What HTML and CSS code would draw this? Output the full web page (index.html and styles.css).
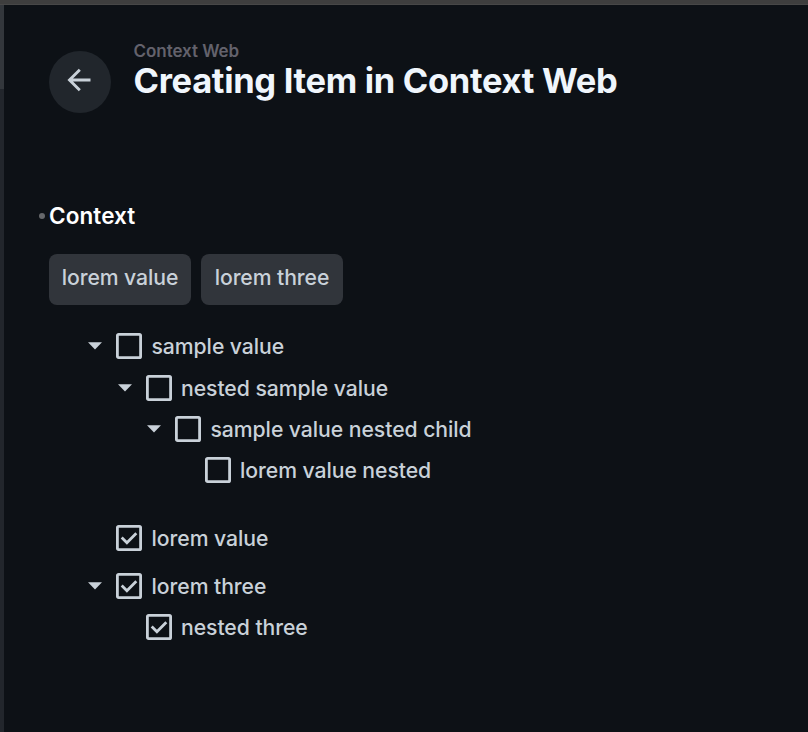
FILE: index.html
```html
<!DOCTYPE html>
<html lang="en">
<head>
<meta charset="utf-8">
<title>Creating Item in Context Web</title>
<link rel="stylesheet" href="styles.css">
</head>
<body>
<svg class="defs" aria-hidden="true">
  <symbol id="caret" viewBox="0 0 14 8"><path d="M0 .3h14L7 7.6z" fill="currentColor"/></symbol>
  <symbol id="box" viewBox="0 0 26 26"><rect x="1.4" y="1.4" width="23.2" height="23.2" rx="1.2" fill="none" stroke="currentColor" stroke-width="2.8"/></symbol>
  <symbol id="checked" viewBox="0 0 26 26"><rect x="1.4" y="1.4" width="23.2" height="23.2" rx="1.2" fill="none" stroke="currentColor" stroke-width="2.8"/><path d="M5.7 12.5l5.2 5.2L20.3 8.3" fill="none" stroke="currentColor" stroke-width="2.8"/></symbol>
</svg>
<div class="topbar"></div>
<div class="shell">
  <div class="rail"><div class="thumb"></div></div>
  <main class="panel">
    <header class="header">
      <button class="back" aria-label="Back">
        <svg width="24" height="24" viewBox="0 0 24 24" fill="none" stroke="currentColor" stroke-width="2.9"><path d="M23.5 12H2.5M12.8 1.7L2.5 12l10.3 10.3"/></svg>
      </button>
      <div class="titles">
        <div class="crumb">Context Web</div>
        <h1 class="title">Creating Item in Context Web</h1>
      </div>
    </header>
    <section class="field">
      <h2 class="label"><span class="dot"></span><span class="name">Context</span></h2>
      <div class="chips"><span class="chip">lorem value</span><span class="chip">lorem three</span></div>
      <ul class="tree">
        <li>
          <div class="row first"><svg class="caret"><use href="#caret"/></svg><svg class="box"><use href="#box"/></svg><span>sample value</span></div>
          <ul>
            <li>
              <div class="row"><svg class="caret"><use href="#caret"/></svg><svg class="box"><use href="#box"/></svg><span>nested sample value</span></div>
              <ul>
                <li>
                  <div class="row"><svg class="caret"><use href="#caret"/></svg><svg class="box"><use href="#box"/></svg><span>sample value nested child</span></div>
                  <ul>
                    <li><div class="row leaf"><svg class="box"><use href="#box"/></svg><span>lorem value nested</span></div></li>
                  </ul>
                </li>
              </ul>
            </li>
          </ul>
        </li>
        <li class="second"><div class="row leaf"><svg class="box"><use href="#checked"/></svg><span>lorem value</span></div></li>
        <li class="third">
          <div class="row"><svg class="caret"><use href="#caret"/></svg><svg class="box"><use href="#checked"/></svg><span>lorem three</span></div>
          <ul>
            <li><div class="row leaf"><svg class="box"><use href="#checked"/></svg><span>nested three</span></div></li>
          </ul>
        </li>
      </ul>
    </section>
  </main>
</div>
</body>
</html>
```
FILE: styles.css
```css
* { box-sizing: border-box; }
body {
  margin: 0;
  height: 732px;
  display: flex;
  flex-direction: column;
  overflow: hidden;
  background: #0d1116;
  color: #c9d1d9;
  font-family: Inter, sans-serif;
}
.defs { display: none; }
.topbar { height: 5px; background: #3e3e3e; border-bottom: 1px solid #474747; }
.shell { flex: 1; display: flex; }
.rail { width: 4px; background: #22262c; }
.thumb { height: 84px; background: #33373c; }
.panel { flex: 1; padding: 35px 45px 0; }
.header { display: flex; align-items: flex-start; }
.back {
  width: 62px;
  height: 62px;
  margin: 11px 22.5px 0 0;
  padding: 0 2px 4px 0;
  border: 0;
  border-radius: 50%;
  background: #21262c;
  color: #c9d1d9;
  display: flex;
  align-items: center;
  justify-content: center;
}
.crumb { font-size: 17px; line-height: 22px; font-weight: 600; color: #63626c; letter-spacing: -0.05px; }
.title { margin: 0; font-size: 34.5px; line-height: 38px; font-weight: 700; color: #f0f6fc; white-space: nowrap; letter-spacing: -0.32px; }
.field { margin-top: 88px; }
.label { margin: 0 0 0 -10px; display: flex; align-items: center; height: 30px; font-size: 22.5px; font-weight: 600; color: #fff; letter-spacing: 0.1px; }
.name { padding-bottom: 1px; }
.dot { width: 6px; height: 6px; margin-right: 4px; border-radius: 50%; background: #66686b; }
.chips { margin-top: 23px; display: flex; gap: 10px; }
.chip { width: 142px; height: 51px; padding-bottom: 5px; border-radius: 8px; background: #31353b; display: flex; align-items: center; justify-content: center; font-size: 21.2px; font-weight: 450; letter-spacing: -0.08px; }
.tree, .tree ul { list-style: none; margin: 0; padding: 0; }
.tree { margin: 21px 0 0 39px; font-size: 21.2px; font-weight: 450; letter-spacing: -0.06px; }
.tree ul { padding-left: 29.5px; }
.row { height: 41px; display: flex; align-items: center; white-space: nowrap; }
.first { padding-bottom: 2px; }
.leaf { padding-left: 28px; }
.caret { width: 14px; height: 8px; margin-right: 14px; }
.box { width: 26px; height: 26px; margin-right: 9.5px; }
.second { margin-top: 27px; }
.third { margin-top: 7px; }
```
